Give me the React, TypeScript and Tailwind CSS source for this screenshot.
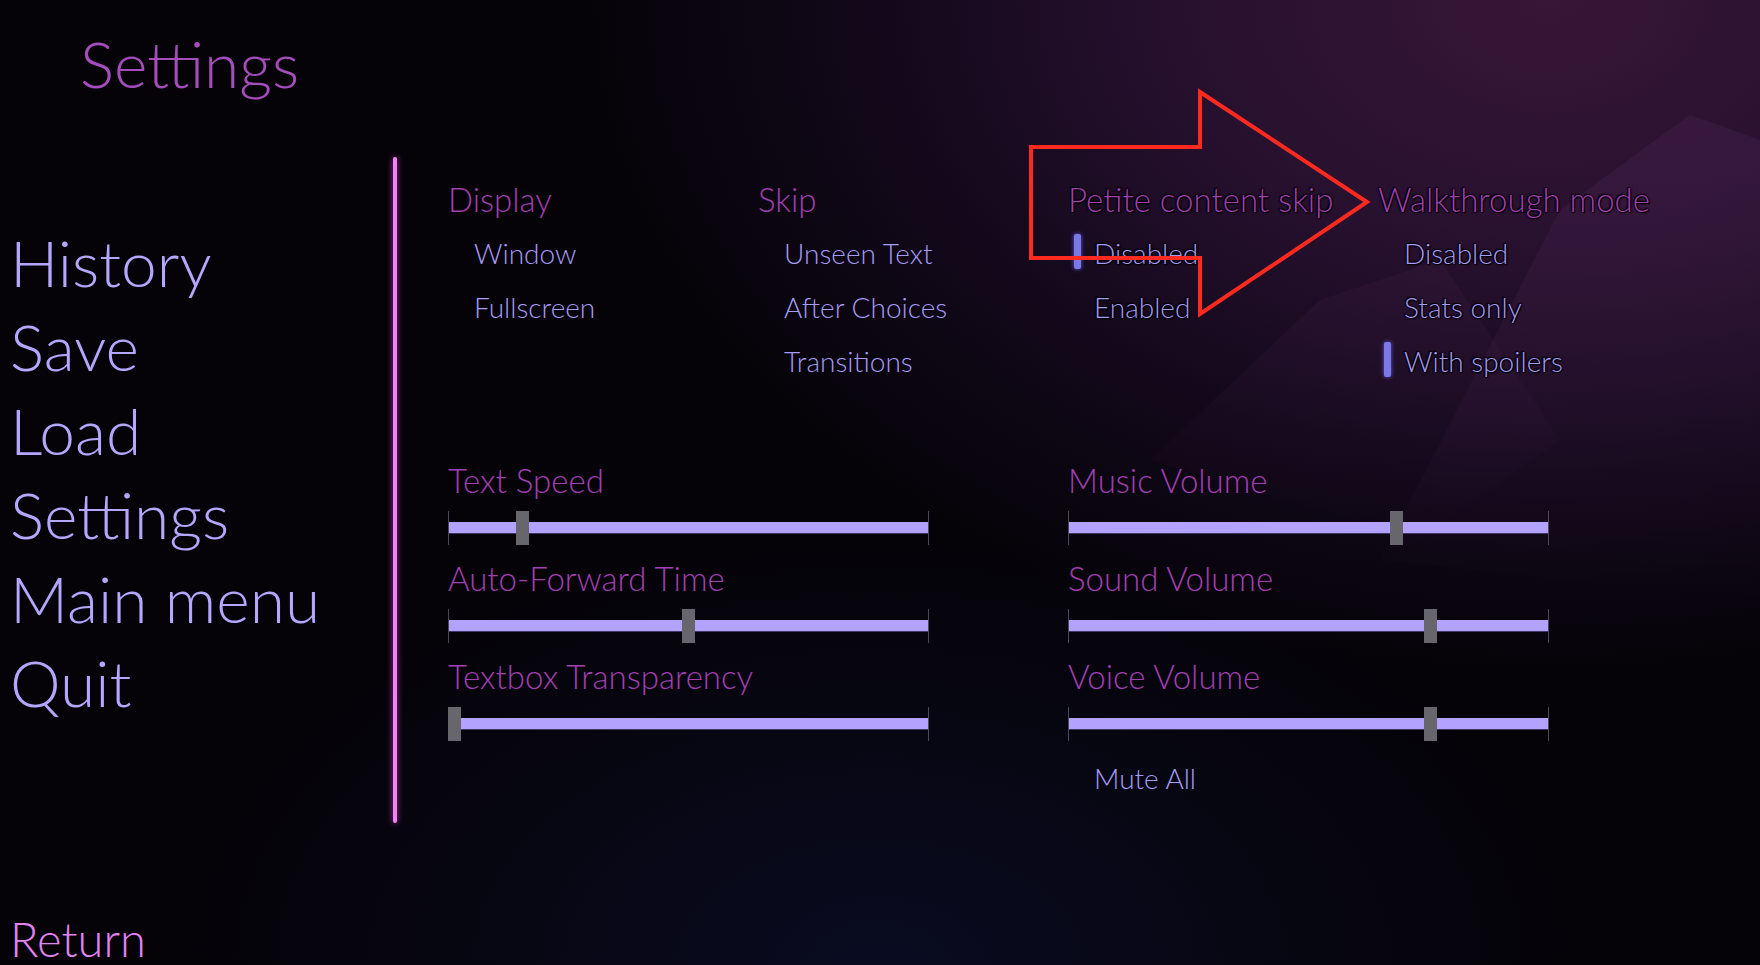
import React from 'react';

type Option = { label: string; selected?: boolean };
type Group = { title: string; options: Option[]; outlined?: boolean };

const groups: Group[] = [
  { title: 'Display', options: [{ label: 'Window' }, { label: 'Fullscreen' }] },
  { title: 'Skip', options: [{ label: 'Unseen Text' }, { label: 'After Choices' }, { label: 'Transitions' }] },
  { title: 'Petite content skip', options: [{ label: 'Disabled', selected: true }, { label: 'Enabled' }], outlined: true },
  {
    title: 'Walkthrough mode',
    options: [{ label: 'Disabled' }, { label: 'Stats only' }, { label: 'With spoilers', selected: true }],
    outlined: true,
  },
];

const leftSliders = [
  { label: 'Text Speed', value: 0.146 },
  { label: 'Auto-Forward Time', value: 0.5 },
  { label: 'Textbox Transparency', value: 0 },
];

const rightSliders = [
  { label: 'Music Volume', value: 0.687 },
  { label: 'Sound Volume', value: 0.76 },
  { label: 'Voice Volume', value: 0.76 },
];

const menu = ['History', 'Save', 'Load', 'Settings', 'Main menu', 'Quit'];

const outline = '[text-shadow:0_0_2px_#000,0_0_2px_#000,1px_1px_1px_#000,-1px_-1px_1px_#000]';

function Slider({ label, value }: { label: string; value: number }) {
  // track is 481px, thumb 13px
  const left = Math.round(value * (481 - 13));
  return (
    <div className="flex flex-col pb-[13px]">
      <div className="h-[40px] text-[33px] leading-[40px] text-[#a23fb2]">{label}</div>
      <div className="relative mt-[11px] h-[34px] w-[481px]">
        <div className="absolute left-0 top-0 h-full w-px bg-[#4a4857]" />
        <div className="absolute right-0 top-0 h-full w-px bg-[#4a4857]" />
        <div className="absolute left-px right-px top-[11px] h-[12px] border-b border-[#3c3766] bg-[#b3a3ff]" />
        <div className="absolute top-0 h-[34px] w-[13px] bg-[#67666c]" style={{ left }} />
      </div>
    </div>
  );
}

function OptionGroup({ group }: { group: Group }) {
  const shadow = group.outlined ? outline : '';
  return (
    <div className="flex w-[310px] flex-col">
      <div className={`h-[54px] text-[33px] leading-[54px] text-[#a23fb2] ${shadow}`}>{group.title}</div>
      {group.options.map((o) => (
        <div key={o.label} className="relative flex h-[54px] items-center">
          {o.selected && (
            <span className="absolute left-[6px] top-[8px] h-[35px] w-[7px] rounded-[2px] bg-[#7b78e8] shadow-[0_0_4px_#5c58d8]" />
          )}
          <span className={`pl-[26px] text-[28px] leading-[54px] text-[#a59cf5] ${shadow}`}>{o.label}</span>
        </div>
      ))}
    </div>
  );
}

export default function App() {
  return (
    <div className="relative h-[965px] w-[1760px] overflow-hidden bg-[#050308] font-['Lato_Light','Open_Sans',sans-serif] font-light">
      {/* background glow */}
      <div className="pointer-events-none absolute inset-0 bg-[radial-gradient(ellipse_55%_70%_at_88%_0%,#371637_0%,#291130_35%,#12081a_70%,transparent_100%)]" />
      <div className="pointer-events-none absolute inset-0 bg-[radial-gradient(ellipse_40%_45%_at_50%_100%,#090b20_0%,transparent_100%)]" />
      <svg className="pointer-events-none absolute inset-0" width="1760" height="965" viewBox="0 0 1760 965">
        <defs>
          <linearGradient id="mtn" x1="0" y1="0" x2="0" y2="1">
            <stop offset="0" stopColor="#44204a" stopOpacity="0.45" />
            <stop offset="1" stopColor="#44204a" stopOpacity="0" />
          </linearGradient>
        </defs>
        <polygon points="1380,560 1560,210 1690,115 1760,140 1760,600" fill="url(#mtn)" />
        <polygon points="1150,460 1320,300 1440,260 1560,440 1420,540" fill="url(#mtn)" opacity="0.5" />
      </svg>

      <div className="relative flex h-full">
        {/* left column */}
        <div className="flex h-full w-[393px] flex-col">
          <div className="pl-[80px] pt-[32px] text-[64px] leading-none text-[#a64dbd]">Settings</div>
          <div className="mt-[125px] flex flex-col pl-[10px]">
            {menu.map((m) => (
              <div key={m} className="text-[64px] leading-[84px] text-[#b4a7ff]">
                {m}
              </div>
            ))}
          </div>
          <div className="mt-auto pb-[2px] pl-[10px] text-[47px] leading-none text-[#e283f3]">Return</div>
        </div>

        {/* divider */}
        <div className="mt-[157px] h-[666px] w-[4px] rounded-full bg-[#f283f2] shadow-[0_0_6px_#b030b0]" />

        {/* content */}
        <div className="flex flex-col pl-[51px] pt-[172px]">
          <div className="flex">
            {groups.map((g) => (
              <OptionGroup key={g.title} group={g} />
            ))}
          </div>

          <div className="mt-[72px] flex">
            <div className="flex w-[620px] flex-col">
              {leftSliders.map((s) => (
                <Slider key={s.label} {...s} />
              ))}
            </div>
            <div className="flex flex-col">
              {rightSliders.map((s) => (
                <Slider key={s.label} {...s} />
              ))}
              <div className="mt-[-3px] pl-[26px] text-[28px] leading-[54px] text-[#a59cf5]">Mute All</div>
            </div>
          </div>
        </div>
      </div>

      {/* red annotation arrow */}
      <svg className="pointer-events-none absolute inset-0" width="1760" height="965" viewBox="0 0 1760 965">
        <polygon
          points="1031,147 1200,147 1200,92 1367,202 1200,314 1200,258 1031,258"
          fill="none"
          stroke="#ff2a1f"
          strokeWidth="4"
        />
      </svg>
    </div>
  );
}
